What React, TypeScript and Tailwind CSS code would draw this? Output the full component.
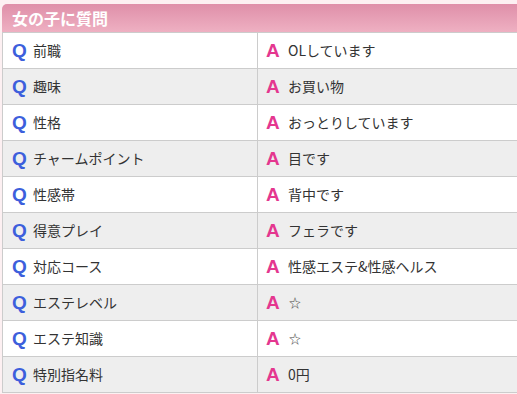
const rows: { q: string; a: string }[] = [
  { q: "前職", a: "OLしています" },
  { q: "趣味", a: "お買い物" },
  { q: "性格", a: "おっとりしています" },
  { q: "チャームポイント", a: "目です" },
  { q: "性感帯", a: "背中です" },
  { q: "得意プレイ", a: "フェラです" },
  { q: "対応コース", a: "性感エステ&性感ヘルス" },
  { q: "エステレベル", a: "☆" },
  { q: "エステ知識", a: "☆" },
  { q: "特別指名料", a: "0円" },
]

export default function App() {
  return (
    <div
      className="w-[517px] h-[394px] overflow-hidden bg-[#fdf0f2] pl-[2px] pt-[4px]"
      style={{ fontFamily: '"Noto Sans CJK JP", "Noto Sans", sans-serif' }}
    >
      <div className="w-[530px]">
        <div className="h-[28px] rounded-tl-[5px] bg-gradient-to-b from-[#df8fa9] to-[#eeb0c2] flex items-center pl-[10px]">
          <h2 className="text-[16px] font-bold text-white leading-none">女の子に質問</h2>
        </div>
        <div className="border-t border-l border-[#cccccc]">
          {rows.map((r, i) => (
            <div
              key={r.q}
              className={`flex h-[36px] border-b border-[#cccccc] ${i % 2 === 1 ? "bg-[#eeeeee]" : "bg-white"}`}
            >
              <div className="w-[255px] shrink-0 border-r border-[#cccccc] flex items-center pl-[9px]">
                <span
                  className="text-[19px] font-bold text-[#3d5fdc] w-[21px] leading-none"
                  style={{ fontFamily: '"Liberation Sans", Arial, sans-serif' }}
                >
                  Q
                </span>
                <span className="text-[14px] text-[#333333]">{r.q}</span>
              </div>
              <div className="flex-1 flex items-center pl-[8px]">
                <span
                  className="text-[19px] font-bold text-[#e4378f] w-[22px] leading-none"
                  style={{ fontFamily: '"Liberation Sans", Arial, sans-serif' }}
                >
                  A
                </span>
                {r.a === "☆" ? (
                  <span className="text-[12px] text-[#444444] pl-[1px]">☆</span>
                ) : (
                  <span className="text-[14px] text-[#333333]">{r.a}</span>
                )}
              </div>
            </div>
          ))}
        </div>
      </div>
    </div>
  )
}
